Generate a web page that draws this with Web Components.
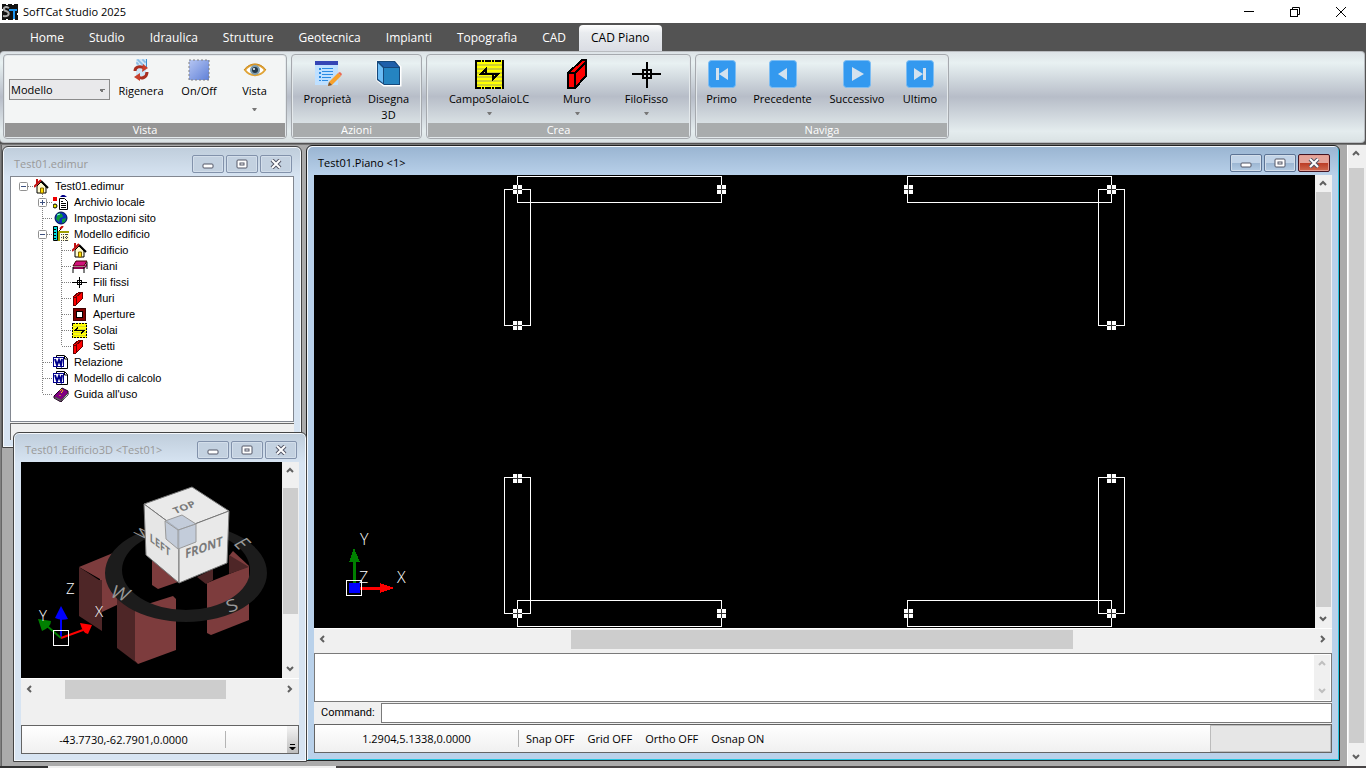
<!DOCTYPE html>
<html lang="it">
<head>
<meta charset="utf-8">
<title>SofTCat Studio 2025</title>
<style>
    html, body {
        margin: 0;
        height: 100%;
    }
    body {
        font: 11px/16px "Open Sans", "Noto Sans", sans-serif;
        color: #000;
        background: #ababab;
        overflow: hidden;
    }
</style>
</head>
<body>

<cad-app>
    <title-bar slot="top" label="SofTCat Studio 2025"></title-bar>
    <ribbon-tabs slot="top" tabs="Home,Studio,Idraulica,Strutture,Geotecnica,Impianti,Topografia,CAD,CAD Piano" current="CAD Piano"></ribbon-tabs>
    <ribbon-bar slot="top">
        <ribbon-group label="Vista" hot style="--w: 284px">
            <combo-box label="Spazio" options="Modello,Layout"></combo-box>
            <ribbon-button compact icon="refresh" label="Rigenera" style="--w: 58px"></ribbon-button>
            <ribbon-button compact icon="select" label="On/Off" style="--w: 58px"></ribbon-button>
            <ribbon-button compact icon="eye" label="Vista" menu style="--w: 53px"></ribbon-button>
        </ribbon-group>
        <ribbon-group label="Azioni" style="--w: 131px">
            <ribbon-button icon="props" label="Proprietà" style="--w: 64px"></ribbon-button>
            <ribbon-button icon="cube" label="Disegna 3D" style="--w: 58px"></ribbon-button>
        </ribbon-group>
        <ribbon-group label="Crea" style="--w: 265px">
            <ribbon-button icon="slab" label="CampoSolaioLC" menu style="--w: 100px"></ribbon-button>
            <ribbon-button icon="wall" label="Muro" menu style="--w: 76px"></ribbon-button>
            <ribbon-button icon="cross" label="FiloFisso" menu style="--w: 63px"></ribbon-button>
        </ribbon-group>
        <ribbon-group label="Naviga" style="--w: 254px">
            <ribbon-button icon="first" label="Primo" style="--w: 47px"></ribbon-button>
            <ribbon-button icon="prev" label="Precedente" style="--w: 75px"></ribbon-button>
            <ribbon-button icon="next" label="Successivo" style="--w: 74px"></ribbon-button>
            <ribbon-button icon="last" label="Ultimo" style="--w: 52px"></ribbon-button>
        </ribbon-group>
    </ribbon-bar>

    <mdi-window label="Test01.edimur" style="left: 2px; top: 1px; width: 300px; height: 302px">
        <tree-view>
            <tree-item root icon="house" label="Test01.edimur" state="open">
                <tree-item icon="archive" label="Archivio locale" state="closed"></tree-item>
                <tree-item icon="globe" label="Impostazioni sito"></tree-item>
                <tree-item icon="model" label="Modello edificio" state="open">
                    <tree-item icon="house" label="Edificio"></tree-item>
                    <tree-item icon="floor" label="Piani"></tree-item>
                    <tree-item icon="crossSmall" label="Fili fissi"></tree-item>
                    <tree-item icon="wallSmall" label="Muri"></tree-item>
                    <tree-item icon="opening" label="Aperture"></tree-item>
                    <tree-item icon="slabSmall" label="Solai"></tree-item>
                    <tree-item icon="wallSmall" label="Setti" last></tree-item>
                </tree-item>
                <tree-item icon="word" label="Relazione"></tree-item>
                <tree-item icon="word" label="Modello di calcolo"></tree-item>
                <tree-item icon="book" label="Guida all'uso" last></tree-item>
            </tree-item>
        </tree-view>
    </mdi-window>

    <mdi-window active label="Test01.Piano &lt;1&gt;" style="left: 306px; top: 0; right: 7px; bottom: 5px">
        <view-port style="--from: 0%; --to: 99%; --hfrom: 24.4%; --hto: 75.4%; --gap: 4px">
            <plan-drawing></plan-drawing>
        </view-port>
        <command-line></command-line>
        <status-bar coords="1.2904,5.1338,0.0000" modes="Snap OFF,Grid OFF,Ortho OFF,Osnap ON"></status-bar>
    </mdi-window>

    <mdi-window label="Test01.Edificio3D &lt;Test01&gt;" style="left: 13px; top: 287px; width: 294px; height: 330px">
        <view-port style="--from: 5%; --to: 74%; --hfrom: 11%; --hto: 77%; --gap: 26px">
            <model-drawing></model-drawing>
        </view-port>
        <status-bar coords="-43.7730,-62.7901,0.0000" grip></status-bar>
    </mdi-window>
</cad-app>

<script>
const svg = (w, h, body, extra = '') =>
    `<svg width="${w}" height="${h}" viewBox="0 0 ${w} ${h}" fill="none" ${extra}>${body}</svg>`
const crisp = 'shape-rendering="crispEdges"'

// pulsante di navigazione blu
const nav = body => svg(28, 28, `<rect x="0.5" y="0.5" width="27" height="27" rx="3" fill="#3399ef" stroke="#7dbdf3"/><g fill="#d4e2ee">${body}</g>`)

const icons = {
    logo: svg(16, 16, `<rect width="16" height="16" fill="#111"/>
        <path d="M4 0h2M10 0h2M0 5v2M16 9v2M4 16h2M11 16h2" stroke="#fff" stroke-width="2"/>
        <path d="M7 4C2 1 0 6 4 7s4 6-3 5" stroke="#aaa" stroke-width="2"/>
        <path d="M7 6h8M12 6v9" stroke="#1b93ee" stroke-width="2"/>`),
    refresh: svg(18, 22, `<rect x="4" y="0" width="10" height="17" fill="#cfe6f7"/>
        <path d="M5 1h2v2h2v2h2v2M10 1h2v2h2M4 4h2v2" stroke="#70aee0"/>
        <path d="M14.500 0v9" stroke="#3c8fd0"/>
        <path d="M3 12c0-5 6-5 9-3" stroke="#a92f20" stroke-width="3"/><path d="M11 5l5 4-6 4z" fill="#c8402c"/>
        <path d="M15 13c0 6-6 7-8 5" stroke="#a92f20" stroke-width="3"/><path d="M8 22l-6-4 6-4z" fill="#c8402c"/>`),
    select: svg(22, 22, `<defs><linearGradient id="g" x1="0" y1="0" x2="1" y2="1"><stop stop-color="#b6c6f2"/><stop offset="1" stop-color="#5f80d8"/></linearGradient></defs>
        <rect x="1" y="1" width="20" height="20" fill="url(#g)" stroke="#808080" stroke-dasharray="2 2"/>`),
    eye: svg(24, 18, `<path d="M2 9C7 2 17 2 22 9 17 16 7 16 2 9z" fill="#fff" stroke="#e0a437" stroke-width="2"/>
        <path d="M1 9C7 1 17 1 23 9" stroke="#c98a22"/>
        <circle cx="12" cy="9" r="5" fill="#7d9cae"/><circle cx="12" cy="9" r="3" fill="#243848"/><circle cx="11" cy="8" r="1" fill="#fff"/>`),
    props: svg(28, 28, `<rect x="1" y="1" width="23" height="24" fill="#bfe0ff"/><rect x="1" y="1" width="23" height="4" fill="#3545b5"/>
        <g fill="#2b8be2"><path d="M5 8h2v2H5zM5 12h2v2H5zM5 16h2v2H5zM5 20h2v1H5zM8 8h11v1H8zM8 11h11v1H8zM8 14h11v1H8zM8 17h9v1H8zM8 20h6v1H8z"/></g>
        <path d="M15 22l9-9 3 3-9 9-4 1z" fill="#f7a12b"/><path d="M24 13l2-1 2 2-1 2z" fill="#ea6a55"/><path d="M14 26l1-4 3 3z" fill="#74543c"/>`),
    cube: svg(26, 28, `<path d="M2 2h17l5 5v18H8L2 20z" fill="#fff" stroke="#fff" stroke-width="3"/>
        <path d="M1 1h18l5 6v18H8L1 20z" fill="#16487a"/>
        <path d="M3 2h15l5 5H8z" fill="#1f5faa"/><path d="M2 3l5 5v15l-5-4z" fill="#6cbcf5"/><path d="M8 8h15v16H8z" fill="#2584c1"/>`),
    slab: svg(29, 29, `<rect width="29" height="29" fill="#ff0"/>
        <path d="M2 5h25M2 9h25M2 13h25M2 17h25M2 21h25M2 25h25" stroke="#d0d030" stroke-width="2"/>
        <path d="M1 0v29M28 0v29" stroke="#000" stroke-width="2"/>
        <path d="M0 1h29M0 28h29" stroke="#000" stroke-width="2" stroke-dasharray="6 1 2 1"/>
        <path d="M23 14H6L11 9v4M6 14h17l-5 5v-4" stroke="#000" stroke-width="2"/>`, crisp),
    slabSmall: svg(15, 15, `<rect width="15" height="15" fill="#ff0"/>
        <path d="M1 3.500h13M1 6.500h13M1 9.500h13M1 12.500h13" stroke="#d8d830"/>
        <rect x="0.5" y="0.5" width="14" height="14" stroke="#000" stroke-dasharray="2 1"/>
        <path d="M12 7.500H3l3-3M3 7.500h9l-3 3" stroke="#000"/>`, crisp),
    wall: svg(20, 30, `<path d="M1 13L15 1h4v16L8 29H1z" fill="#f00"/>
        <path d="M1 14L15 1h4v16L8 29H1zM1 14h7v15M8 14L19 3" stroke="#000" stroke-width="2"/>`, crisp),
    wallSmall: svg(15, 15, `<path d="M1 6l6-5h3v7l-6 6H1z" fill="#f00"/><path d="M1 6l6-5h3v7l-6 6H1zM1 6h3v8M4 6l6-5" stroke="#600"/>`, crisp),
    cross: svg(30, 28, `<path d="M0 14h29M15 2v26" stroke="#000" stroke-width="2"/><rect x="11" y="10" width="8" height="8" stroke="#000" stroke-width="2"/>`, crisp),
    crossSmall: svg(15, 15, `<path d="M0 7.500h15M7.500 2v11" stroke="#000"/><rect x="5.5" y="5.5" width="4" height="4" stroke="#000"/>`, crisp),
    first: nav('<path d="M8 8h3v12H8zM20 8v12l-9-6z"/>'),
    prev: nav('<path d="M18 8v12l-9-6z"/>'),
    next: nav('<path d="M9 7v14l12-7z"/>'),
    last: nav('<path d="M17 8h3v12h-3zM8 8v12l9-6z"/>'),
    house: svg(15, 15, `<path d="M3 7l4-4 5 5v6H3z" fill="#fffbd0" stroke="#000"/><path d="M7 2l7 7" stroke="#000" stroke-width="2"/>
        <path d="M0 8l7-7M3 0v5" stroke="#c01010" stroke-width="2"/><path d="M6.500 9h3v5h-3z" fill="#ffe000" stroke="#806000"/>`),
    archive: svg(15, 15, `<path d="M0 2h4v4H0z" fill="#e00"/><path d="M7 2l3-3 4 3z" fill="#008"/><circle cx="2" cy="11" r="2" fill="#ee0" stroke="#000"/>
        <path d="M6.500 3.500h5l3 3v8h-8z" fill="#fff" stroke="#000"/><path d="M8 6.500h2M8 8.500h5M8 10.500h5M8 12.500h5" stroke="#000"/>`),
    globe: svg(15, 15, `<circle cx="8" cy="7" r="6" fill="#0a2fc0" stroke="#001050"/><path d="M5 2l4 1 1 3-3 1-1 4-3-3zM9 8l4-1-1 4-3 1z" fill="#0b9a3a"/><path d="M4 4l3-1" stroke="#8fe"/>`),
    model: svg(16, 16, `<path d="M0.500 0.500h4v14h-4z" fill="#0dd" stroke="#000"/><path d="M1 3.500h2M1 6.500h2M1 9.500h2M1 12.500h2" stroke="#000"/>
        <path d="M7 3l3-3" stroke="#c00" stroke-width="2"/><path d="M5 6l3-3" stroke="#000"/>
        <path d="M6 6h10M6 5v10" stroke="#a0a000" stroke-width="2"/><path d="M8 8h8v7H8z" fill="#fffbd0"/><path d="M8 8.500h8M8 11.500h8M8 14.500h8M10.500 8v7M13.500 8v7" stroke="#444" stroke-dasharray="1 1"/>`),
    floor: svg(16, 15, `<path d="M4 2h11l-3 5H1z" fill="#d0107a" stroke="#400"/><path d="M1 8h11l3-4v3l-3 3H1z" fill="#900050"/><path d="M1 8v6M12 8v6M15 3v7" stroke="#000"/>`),
    opening: svg(15, 15, `<rect x="1.5" y="1.5" width="12" height="12" fill="#800000" stroke="#400000"/><rect x="4.5" y="4.5" width="6" height="6" fill="#fff" stroke="#000"/>`, crisp),
    word: svg(16, 15, `<path d="M3.500 0.500h8l3 3v10h-11z" fill="#fff" stroke="#000"/><path d="M11.500 1v3h3" stroke="#000"/>
        <rect x="0.5" y="2.5" width="10" height="9" fill="#fff" stroke="#00008b"/><path d="M2 4l2 6 2-5 2 5 1-6" stroke="#00008b" stroke-width="2"/>`),
    book: svg(16, 15, `<path d="M1 9l8-8 6 3v3l-7 8-7-4z" fill="#800080" stroke="#200020"/><path d="M2 10l6 3 7-7v2l-7 6-6-3z" fill="#fff" stroke="#444"/><path d="M7 4c1-3 4-1 2 1l-1 1M7 8v1" stroke="#ffe000"/>`)
}

/** Classe base : scrive markup e stile nello shadow root */
class BaseElement extends HTMLElement {
    connectedCallback() {
        if (this.shadowRoot) return
        this.attachShadow({ mode: 'open' }).innerHTML = this.render()
    }
    attr(name) {
        return (this.getAttribute(name) || '').replace(/</g, '&lt;').replace(/>/g, '&gt;')
    }
    list(name) {
        return this.attr(name).split(',').filter(Boolean)
    }
}

class CadApp extends BaseElement {
    render() {
        return `<style>
            :host { display: flex; flex-direction: column; min-height: 100vh; }
            .work { flex: 1; display: flex; }
            .desktop {
                flex: 1; position: relative; overflow: hidden;
                background: #ababab; box-shadow: inset 1px 0 #808080, inset 2px 0 #666;
            }
            .bar { display: flex; width: 17px; border: solid #fff; border-width: 0 0 0 1px; padding-right: 1px; background: #f0f0f0; }
            .edge { height: 2px; background: linear-gradient(90deg, #333 48px, #f0f0f0 48px 336px, #484546 336px); }
        </style>
        <slot name="top"></slot>
        <main class="work">
            <div class="desktop"><slot></slot></div>
            <div class="bar"><scroll-bar style="--from: 1%; --to: 99%"></scroll-bar></div>
        </main>
        <div class="edge"></div>`
    }
}

class TitleBar extends BaseElement {
    render() {
        return `<style>
            :host { display: flex; align-items: center; height: 23px; background: #fff; padding: 0 2px; }
            h1 { flex: 1; margin: 0 0 0 5px; font: inherit; }
            svg { display: block; }
            button { width: 46px; height: 23px; padding: 0; border: 0; background: none; display: grid; place-items: center; }
        </style>
        ${icons.logo}
        <h1>${this.attr('label')}</h1>
        <button aria-label="Riduci">${svg(10, 10, '<path d="M0 4h10v1H0z" fill="#000"/>')}</button>
        <button aria-label="Ripristina">${svg(10, 10, '<rect x="0.5" y="2.5" width="7" height="7" stroke="#000"/><path d="M2.500 2V.5h7v7H8" stroke="#000"/>')}</button>
        <button aria-label="Chiudi">${svg(10, 10, '<path d="M0 0l10 10M10 0L0 10" stroke="#000"/>')}</button>`
    }
}

class RibbonTabs extends BaseElement {
    render() {
        const current = this.attr('current')
        return `<style>
            :host { display: block; background: #535353; }
            nav { display: flex; gap: 1px; height: 28px; padding-left: 18px; align-items: flex-end; }
            button {
                height: 26px; padding: 0 12px; border: 0; background: none;
                font: 12px/26px "Open Sans", "Noto Sans", sans-serif; color: #fff;
            }
            [aria-selected=true] {
                color: #000; border-radius: 4px 4px 0 0;
                background: linear-gradient(#fff, #e9ecef 30%, #dadde4);
            }
        </style>
        <nav role="tablist">
            ${this.list('tabs').map(t => `<button role="tab" aria-selected="${t === current}">${t}</button>`).join('')}
        </nav>`
    }
}

class RibbonBar extends BaseElement {
    render() {
        return `<style>
            :host { display: block; background: #535353; padding-right: 1px; border-bottom: 1px solid #777; }
            .bar {
                display: flex; gap: 4px; padding: 2px 3px 3px 3px; border: 1px solid #b9bcc0; border-left: 0; border-radius: 4px;
                background: linear-gradient(#dde3e7, #e8f1f2 12%, #b7bdc8 50%, #e4ecee 88%, #dae2e4);
                margin-bottom: 1px;
            }
        </style>
        <div class="bar"><slot></slot></div>`
    }
}

class RibbonGroup extends BaseElement {
    render() {
        return `<style>
            :host {
                display: flex; flex-direction: column; box-sizing: border-box; width: var(--w);
                height: 85px; border: 1px solid #a5a9ae; border-radius: 4px; overflow: hidden;
                box-shadow: inset 0 0 0 1px #e4e9ec; padding: 0 1px 1px;
                background: linear-gradient(#dfe5e8, #e8f1f2 10%, #b7bdc8 50%, #dfe7e9 88%);
            }
            :host([hot]) { background: #f3f5f5; }
            .items { flex: 1; display: flex; justify-content: center; min-height: 0; }
            footer { height: 14px; line-height: 14px; text-align: center; color: #fff; background: #a9acad; }
            :host([hot]) footer { background: #959595; }
        </style>
        <div class="items"><slot></slot></div>
        <footer>${this.attr('label')}</footer>`
    }
}

class RibbonButton extends BaseElement {
    render() {
        return `<style>
            :host { display: block; width: var(--w); }
            button {
                display: flex; flex-direction: column; align-items: center;
                width: 100%; padding: 4px 2px 0; border: 0; background: none;
                font: inherit; color: inherit;
            }
            .icon { display: grid; place-items: center; height: 30px; margin-bottom: 2px; }
            :host([compact]) .icon { height: 22px; }
            svg { display: block; }
            .arrow { margin-top: 5px; }
            :host([compact]) .arrow { margin-top: 9px; }
        </style>
        <button>
            <span class="icon">${icons[this.attr('icon')]}</span>
            <span>${this.attr('label')}</span>
            ${this.hasAttribute('menu') ? svg(5, 3, '<path d="M0 0h5L3 3H2z" fill="#777"/>', 'class="arrow"') : ''}
        </button>`
    }
}

class ComboBox extends BaseElement {
    render() {
        return `<style>
            :host { display: block; width: 103px; padding-top: 24px; }
            select {
                appearance: none; display: block; width: 101px; height: 21px; padding: 0 1px;
                border: 1px solid #8b8b8b; border-radius: 0; color: #000; font: inherit;
                background: linear-gradient(135deg, #777 50%, transparent 50%) 92px 9px / 3px 3px no-repeat,
                    linear-gradient(225deg, #777 50%, transparent 50%) 89px 9px / 3px 3px no-repeat, #e9e9eb;
            }
        </style>
        <select aria-label="${this.attr('label')}">${this.list('options').map(o => `<option>${o}</option>`).join('')}</select>`
    }
}

/** Barra di scorrimento, posizione del cursore in --from e --to */
class ScrollBar extends BaseElement {
    render() {
        const h = this.hasAttribute('horizontal')
        const color = this.hasAttribute('disabled') ? '#bfbfbf' : '#606060'
        const arrow = angle => svg(9, 9, `<path d="M1 6l3-3 3 3" stroke="${color}" stroke-width="2" transform="rotate(${angle} 4 4)"/>`)
        return `<style>
            :host { display: flex; flex: 1; flex-direction: ${h ? 'row' : 'column'}; background: #f0f0f0; min-width: 0; min-height: 0; }
            button { flex: none; width: 17px; height: 17px; padding: 0; border: 0; background: none; display: grid; place-items: center; align-self: center; }
            .track { flex: 1; display: flex; flex-direction: inherit; }
            .before { flex: 0 0 var(--from); }
            .thumb { flex: 0 0 calc(var(--to) - var(--from)); background: #cdcdcd; margin: ${h ? '1px 0 0' : '0 1px'}; }
            :host([disabled]) .thumb { background: none; }
        </style>
        <button aria-label="Indietro">${arrow(h ? -90 : 0)}</button>
        <div class="track"><div class="before"></div><div class="thumb"></div></div>
        <button aria-label="Avanti">${arrow(h ? 90 : 180)}</button>`
    }
}

class MdiWindow extends BaseElement {
    render() {
        return `<style>
            :host {
                position: absolute; box-sizing: border-box; display: flex; flex-direction: column;
                border: 1px solid #444; border-radius: 6px 6px 0 0; padding: 0 7px 7px;
                background: linear-gradient(#bfcddb, #d7e4f2 30px); box-shadow: inset 0 0 0 1px #f4f8fc;
            }
            :host([active]) {
                border-color: #222;
                background: linear-gradient(#99b4d1, #b9d1ea 30px);
                box-shadow: inset 1px 1px #f4f8fc, inset -1px -1px #28c4e0;
            }
            header { display: flex; gap: 2px; height: 29px; flex: none; padding: 0 2px 0 4px; box-sizing: border-box; }
            h2 { flex: 1; margin: 0; padding-top: 9px; font: inherit; color: #999; white-space: nowrap; }
            :host([active]) h2 { color: #000; }
            button {
                box-sizing: border-box; width: 32px; height: 18px; margin-top: 8px; padding: 0;
                border: 1px solid #8292ab; border-radius: 2px; background: #c3d1e0;
                box-shadow: inset 0 0 0 1px #d3deea; display: grid; place-items: center;
            }
            :host([active]) button { border-color: #5c7394; background: linear-gradient(#c2d4e8 50%, #9cb6d2 50%, #b4cce4); }
            :host([active]) .close { border-color: #431422; background: linear-gradient(#e5a49a 50%, #bb3b24 50%, #cf6a50); box-shadow: inset 0 0 0 1px #e39c90; }
            .body { flex: 1; display: flex; flex-direction: column; min-height: 0; background: #f0f0f0; }
        </style>
        <header>
            <h2>${this.attr('label')}</h2>
            <button aria-label="Riduci">${svg(12, 10, '<rect x="1" y="5" width="10" height="4" rx="1" fill="#fff" stroke="#535666"/>')}</button>
            <button aria-label="Ingrandisci">${svg(12, 10, '<rect x="1" y="1" width="10" height="8" rx="1" fill="#fff" stroke="#535666"/><rect x="4" y="4" width="4" height="2" stroke="#535666"/>')}</button>
            <button class="close" aria-label="Chiudi">${svg(12, 10, '<path d="M2 1l8 8M10 1L2 9" stroke="#535666" stroke-width="4"/><path d="M2 1l8 8M10 1L2 9" stroke="#fff" stroke-width="2"/>')}</button>
        </header>
        <div class="body"><slot></slot></div>`
    }
}

class TreeView extends BaseElement {
    render() {
        return `<style>
            :host { display: flex; flex: 1; flex-direction: column; font: 11px/16px "Liberation Sans", Arial, sans-serif; }
            .tree { flex: 1; border: 1px solid #828790; background: #fff; padding: 1px 0 0 3px; }
            .below { height: 16px; margin-top: 1px; border: 1px solid #696969; border-width: 1px 0 0 1px; }
        </style>
        <div class="tree" role="tree"><slot></slot></div>
        <div class="below"></div>`
    }
}

class TreeItem extends BaseElement {
    render() {
        const state = this.attr('state')
        const plus = state === 'closed' ? '<path d="M4.500 2v5" stroke="#3c5080"/>' : ''
        const box = svg(9, 9, `<rect x="0.5" y="0.5" width="8" height="8" rx="1" fill="#fff" stroke="#919191"/><path d="M2 4.500h5" stroke="#3c5080"/>${plus}`)
        return `<style>
            :host {
                display: block;
                background: repeating-linear-gradient(#808080 0 1px, transparent 1px 2px) 9px 0 / 1px 100% no-repeat;
            }
            :host([last]) { background-size: 1px 8px; }
            :host([root]) { background: none; }
            .row { display: flex; align-items: center; height: 16px; }
            .cell {
                flex: none; display: flex; align-items: center; width: 15px; height: 16px; padding-left: 5px;
                background: repeating-linear-gradient(90deg, #808080 0 1px, transparent 1px 2px) 10px 8px / 10px 1px no-repeat;
            }
            button { width: 9px; height: 9px; padding: 0; border: 0; background: none; }
            svg { display: block; }
            .icon { width: 16px; margin-right: 5px; }
            .kids { padding-left: 19px; }
        </style>
        <div class="row" role="treeitem">
            <span class="cell">${state ? `<button aria-label="Espandi">${box}</button>` : ''}</span>
            <span class="icon">${icons[this.attr('icon')]}</span>
            <span>${this.attr('label')}</span>
        </div>
        <div class="kids"><slot></slot></div>`
    }
}

class ViewPort extends BaseElement {
    render() {
        return `<style>
            :host { display: flex; flex: 1; flex-direction: column; min-height: 0; padding-bottom: var(--gap); }
            .view { flex: 1; display: flex; min-height: 0; border-bottom: 1px solid #fff; }
            .canvas { flex: 1; display: flex; background: #000; overflow: hidden; min-width: 0; }
            .side { display: flex; width: 17px; }
            .bottom { display: flex; height: 20px; --from: var(--hfrom); --to: var(--hto); }
        </style>
        <div class="view">
            <div class="canvas"><slot></slot></div>
            <div class="side"><scroll-bar></scroll-bar></div>
        </div>
        <div class="bottom"><scroll-bar horizontal></scroll-bar></div>`
    }
}

class PlanDrawing extends BaseElement {
    render() {
        const walls = [[517, 176, 204, 26], [907, 176, 204, 26], [504, 189, 26, 136], [1098, 189, 26, 136],
            [504, 477, 26, 136], [1098, 477, 26, 136], [517, 600, 204, 26], [907, 600, 204, 26]]
        const nodes = [[517, 189], [721, 189], [908, 189], [1111, 189], [517, 325], [1111, 325],
            [517, 478], [1111, 478], [517, 613], [721, 613], [908, 613], [1111, 613]]
        return `<style>
            :host { display: block; flex: 1; }
            svg { display: block; width: 100%; height: 100%; }
            text { font: 300 16px "Open Sans", sans-serif; fill: #fff; }
        </style>
        <svg><g transform="translate(-314 -175)" ${crisp}>
            ${walls.map(([x, y, w, h]) => `<rect x="${x + .5}" y="${y + .5}" width="${w}" height="${h}" fill="none" stroke="#fff"/>`).join('')}
            ${nodes.map(([x, y]) => `<path d="M${x - 4} ${y - 4}h9v9h-9z" fill="#fff"/><path d="M${x - 4} ${y + .5}h9M${x + .5} ${y - 4}v9" stroke="#333"/>`).join('')}
            <path d="M354.500 583v-23" stroke="#008000" stroke-width="3"/><path d="M354 548l6 14h-11z" fill="#008000"/>
            <path d="M360 588.500h20" stroke="#f00" stroke-width="3"/><path d="M380 583v10l14-5z" fill="#f00"/>
            <rect x="349" y="583" width="11" height="10" fill="#00f"/>
            <rect x="346.5" y="580.5" width="15" height="15" fill="none" stroke="#fff"/>
            <text x="360" y="545">Y</text><text x="359" y="583">Z</text><text x="397" y="583">X</text>
        </g></svg>`
    }
}

class ModelDrawing extends BaseElement {
    render() {
        return `<style>
            :host { display: block; flex: 1; }
            svg { display: block; }
            text { font: 300 15px "Open Sans", sans-serif; fill: #fff; }
            .face text { font: 700 13px "Open Sans", sans-serif; fill: #7a7a7a; text-anchor: middle; }
            .ring text { font: 400 20px "Open Sans", sans-serif; fill: #999; text-anchor: middle; }
        </style>
        <svg width="261" height="216" viewBox="21 462 261 216">
            <g fill="#7d3c3d">
                <path d="M79 567l34-14 6 2v49l-17 8-2-2v-31z"/>
                <path d="M152 560l26 22-20 7-6-4z"/>
                <path d="M229 556l4-5 16 15-2 2z"/>
                <path d="M207 583l42-17v54l-38 15-4-2z"/>
                <path d="M135 608l38-12 3 3v51l-38 14-3-3z"/>
            </g>
            <g fill="#4e2627">
                <path d="M79 567l20 13h3v51l-23-15z"/>
                <path d="M197 577l16-8v11l-7 4z"/>
                <path d="M229 555l20 12-20 7z"/>
                <path d="M117 595l18 10v56l3 3-21-16z"/>
            </g>
            <g class="ring">
                <path fill-rule="evenodd" fill="#1c1c1c" d="M105 573a81 49 0 0 0 162 0a81 49 0 0 0-162 0zM122 570a64 40 0 0 1 128 0a64 40 0 0 1-128 0z"/>
                <text transform="matrix(.9 .3 -.5 .8 117 599)">W</text>
                <text transform="matrix(1 -.3 .3 .8 234 611)">S</text>
                <text transform="matrix(.6 .6 -.9 .5 236 547)">E</text>
                <text transform="matrix(-.6 .4 .8 .4 148 536)">N</text>
            </g>
            <g class="face" stroke="#777" stroke-linejoin="round">
                <path d="M144 504l48-17 37 24-50 19z" fill="#eaeaea"/>
                <path d="M144 504l35 26v53l-33-28z" fill="#e6e6e6"/>
                <path d="M229 511l-50 19v53l48-20z" fill="#e9e9e9"/>
                <path d="M165 521l17-6 14 9v18l-18 7-12-10z" fill="#b9c4d6" fill-opacity=".8" stroke="#999"/>
                <path d="M165 521l13 9 18-6M178 530v19" fill="none" stroke="#999"/>
                <g stroke="none">
                    <text transform="matrix(.8 -.3 .4 .6 186 510)">TOP</text>
                    <text transform="matrix(.7 .55 0 .9 160 549)">LEFT</text>
                    <text transform="matrix(.85 -.3 0 1 204 552)">FRONT</text>
                </g>
            </g>
            <path d="M61 638v-22" stroke="#00f" stroke-width="2"/><path d="M61 606l7 13q-7 2-13-1z" fill="#00f"/>
            <path d="M61 638l22-8" stroke="#f00" stroke-width="2"/><path d="M92 625l-4 9q-5 0-8-11z" fill="#f00"/>
            <path d="M61 638l-14-12" stroke="#008000" stroke-width="2"/><path d="M38 619l13 2q0 6-9 10z" fill="#008000"/>
            <rect x="53.5" y="630.5" width="15" height="15" fill="none" stroke="#fff"/>
            <text x="66" y="594">Z</text><text x="39" y="621">Y</text><text x="95" y="617">X</text>
        </svg>`
    }
}

class CommandLine extends BaseElement {
    render() {
        return `<style>
            :host { display: block; flex: none; }
            .log { display: flex; box-sizing: border-box; height: 49px; border: 1px solid #7a7a7a; background: #fff; padding: 1px; }
            textarea { flex: 1; border: 0; padding: 0; resize: none; outline: 0; font: inherit; overflow: hidden; }
            .log div { display: flex; width: 16px; }
            .row { display: flex; align-items: center; height: 21px; margin-bottom: 1px; }
            label { width: 60px; padding-left: 7px; font-family: Roboto, "Liberation Sans", sans-serif; }
            input { flex: 1; box-sizing: border-box; height: 20px; border: 1px solid #7a7a7a; padding: 0 2px; outline: 0; font: inherit; }
        </style>
        <div class="log">
            <textarea aria-label="Messaggi" readonly></textarea>
            <div><scroll-bar disabled style="--from: 0%; --to: 100%"></scroll-bar></div>
        </div>
        <div class="row"><label for="cmd">Command:</label><input id="cmd" type="text"></div>`
    }
}

class StatusBar extends BaseElement {
    render() {
        const grip = this.hasAttribute('grip')
        return `<style>
            :host {
                display: flex; flex: none; align-items: center; box-sizing: border-box; height: 29px;
                border: 1px solid #646464; background: linear-gradient(#fff, #f0f0f0);
            }
            output { width: 203px; text-align: center; }
            .modes { flex: 1; display: flex; gap: 13px; padding: 0 7px; height: 17px; border-left: 1px solid #b4b4b4; }
            button { border: 0; padding: 0; background: none; font: inherit; color: inherit; }
            .panel { width: 119px; height: 25px; border: 1px solid #bcbcbc; background: #e6e6e6; }
            .grip { width: 11px; height: 27px; display: grid; align-items: end; justify-items: center; background: linear-gradient(#f4f4f4, #bdbdbd); }
        </style>
        <output>${this.attr('coords')}</output>
        <div class="modes">${this.list('modes').map(m => `<button>${m}</button>`).join('')}</div>
        ${grip ? `<button class="grip" aria-label="Opzioni">${svg(7, 9, '<path d="M1 0h5v1H1zM0 3h7L4 6H3z" fill="#000"/>')}</button>` : '<div class="panel"></div>'}`
    }
}

const elements = {
    'cad-app': CadApp,
    'title-bar': TitleBar,
    'ribbon-tabs': RibbonTabs,
    'ribbon-bar': RibbonBar,
    'ribbon-group': RibbonGroup,
    'ribbon-button': RibbonButton,
    'combo-box': ComboBox,
    'scroll-bar': ScrollBar,
    'mdi-window': MdiWindow,
    'tree-view': TreeView,
    'tree-item': TreeItem,
    'view-port': ViewPort,
    'plan-drawing': PlanDrawing,
    'model-drawing': ModelDrawing,
    'command-line': CommandLine,
    'status-bar': StatusBar
}
Object.entries(elements).forEach(([name, cls]) => customElements.define(name, cls))
</script>
</body>
</html>
